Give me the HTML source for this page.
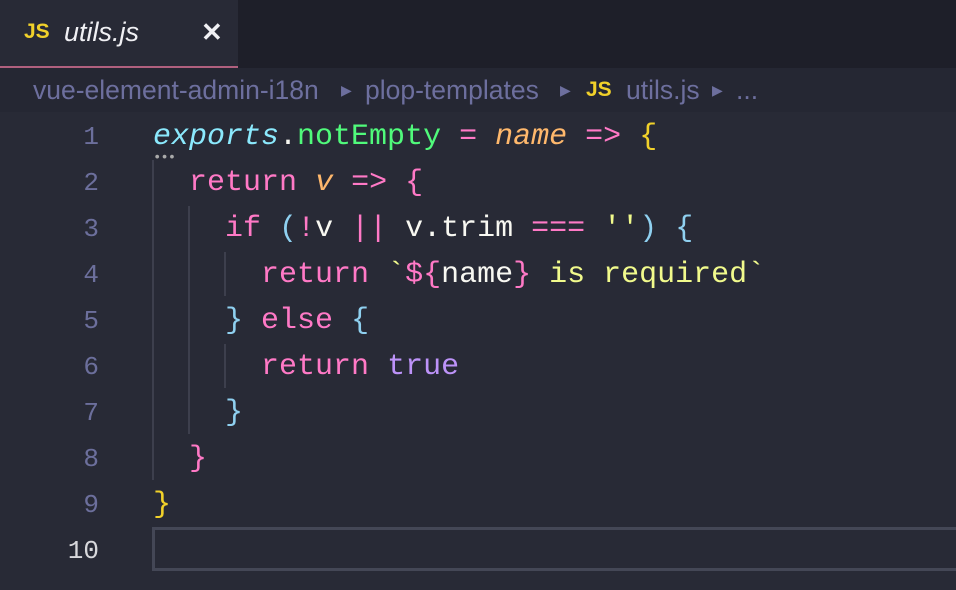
<!DOCTYPE html>
<html><head><meta charset="utf-8"><style>
body{margin:0;width:956px;height:590px;background:#282a36;overflow:hidden;position:relative;font-family:"Liberation Mono",monospace}
.tabbar{position:absolute;left:0;top:0;width:956px;height:68px;background:#1e1f29}
.tab{position:absolute;left:0;top:0;width:238px;height:66px;background:#282a36;border-bottom:2px solid #b0607e}
.bc{position:absolute;left:0;top:68px;width:956px;height:44px;background:#252733;font-family:"Liberation Sans",sans-serif;font-size:26.5px;color:#6d6f9e;line-height:44px}
.js{color:#f1d12a;font-weight:bold;font-family:"Liberation Sans",sans-serif}
.ln{position:absolute;left:0;width:99px;text-align:right;font-size:26px;color:#6c6f9c;height:46px;line-height:46px}
.code{position:absolute;left:153px;font-size:30px;height:46px;line-height:46px;white-space:pre;color:#f8f8f2}
.g{position:absolute;width:2px;background:#3d3f4d}
.p{color:#ff79c6}.c{color:#8be9fd}.gr{color:#50fa7b}.o{color:#ffb86c;font-style:italic}.y{color:#f1fa8c}.b{color:#8fd0f0}.pu{color:#bd93f9}.yl{color:#f1d12a}
</style></head><body>
<div class="tabbar"><div class="tab">
<span class="js" style="position:absolute;left:24px;top:20px;font-size:21px">JS</span>
<span style="position:absolute;left:64px;top:17px;font-family:'Liberation Sans',sans-serif;font-style:italic;font-size:27px;color:#f0f0f4">utils.js</span>
<span style="position:absolute;left:201px;top:17px;font-family:'Liberation Sans',sans-serif;font-weight:bold;font-size:26px;color:#f0f0f4">✕</span>
</div></div>
<div class="bc"><span style="position:absolute;left:33px">vue-element-admin-i18n</span>
<span style="position:absolute;left:341px;font-size:14px">▶</span>
<span style="position:absolute;left:365px">plop-templates</span>
<span style="position:absolute;left:560px;font-size:14px">▶</span>
<span class="js" style="position:absolute;left:586px;font-size:21px">JS</span>
<span style="position:absolute;left:626px">utils.js</span>
<span style="position:absolute;left:712px;font-size:14px">▶</span>
<span style="position:absolute;left:736px">...</span></div>

<div class="g" style="left:152px;top:160px;height:320px"></div>
<div class="g" style="left:188px;top:206px;height:228px"></div>
<div class="g" style="left:224px;top:252px;height:44px"></div>
<div class="g" style="left:224px;top:344px;height:44px"></div>
<div style="position:absolute;left:152px;top:527px;width:810px;height:38px;border:3px solid #444756;border-right:none"></div>
<div style="position:absolute;left:153px;top:150px;color:#aaa;font-size:14px;letter-spacing:-1px">•••</div>

<div class="ln" style="top:114px">1</div><div class="code" style="top:114px"><span class="c" style="font-style:italic">exports</span>.<span class="gr">notEmpty</span> <span class="p">=</span> <span class="o">name</span> <span class="p">=&gt;</span> <span class="yl">{</span></div>
<div class="ln" style="top:160px">2</div><div class="code" style="top:160px">  <span class="p">return</span> <span class="o">v</span> <span class="p">=&gt;</span> <span class="p">{</span></div>
<div class="ln" style="top:206px">3</div><div class="code" style="top:206px">    <span class="p">if</span> <span class="b">(</span><span class="p">!</span>v <span class="p">||</span> v.trim <span class="p">===</span> <span class="y">''</span><span class="b">)</span> <span class="b">{</span></div>
<div class="ln" style="top:252px">4</div><div class="code" style="top:252px">      <span class="p">return</span> <span class="y">`</span><span class="p">${</span>name<span class="p">}</span><span class="y"> is required`</span></div>
<div class="ln" style="top:298px">5</div><div class="code" style="top:298px">    <span class="b">}</span> <span class="p">else</span> <span class="b">{</span></div>
<div class="ln" style="top:344px">6</div><div class="code" style="top:344px">      <span class="p">return</span> <span class="pu">true</span></div>
<div class="ln" style="top:390px">7</div><div class="code" style="top:390px">    <span class="b">}</span></div>
<div class="ln" style="top:436px">8</div><div class="code" style="top:436px">  <span class="p">}</span></div>
<div class="ln" style="top:482px">9</div><div class="code" style="top:482px"><span class="yl">}</span></div>
<div class="ln" style="top:528px;color:#d8d8dc">10</div>
</body></html>
